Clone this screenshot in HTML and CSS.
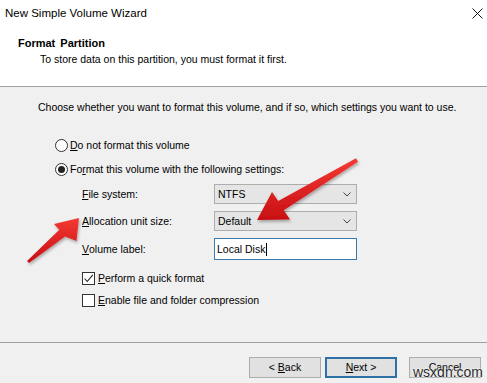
FILE: index.html
```html
<!DOCTYPE html>
<html lang="en">
<head>
    <meta charset="UTF-8">
    <title>New Simple Volume Wizard</title>
    <link rel="stylesheet" href="styles.css">
</head>
<body>
    <div class="window">
        <div class="header">
            <div class="titlebar">
                <span class="title">New Simple Volume Wizard</span>
                <svg class="close" width="11" height="11" viewBox="0 0 11 11">
                    <path d="M0.5 0.5 L10.5 10.5 M10.5 0.5 L0.5 10.5" stroke="#111" stroke-width="1" fill="none"/>
                </svg>
            </div>
            <div class="heading">Format Partition</div>
            <div class="subheading">To store data on this partition, you must format it first.</div>
        </div>

        <div class="content">
            <div class="intro">Choose whether you want to format this volume, and if so, which settings you want to use.</div>

            <div class="options">
                <div class="choice">
                    <span class="radio"></span>
                    <span><u>D</u>o not format this volume</span>
                </div>
                <div class="choice gap">
                    <span class="radio checked"></span>
                    <span>Fo<u>r</u>mat this volume with the following settings:</span>
                </div>

                <div class="settings">
                    <div class="label"><u>F</u>ile system:</div>
                    <div class="select">
                        <span>NTFS</span>
                        <svg width="8" height="5" viewBox="0 0 8 5"><path d="M0.5 0.5 L4 4 L7.5 0.5" stroke="#444" fill="none"/></svg>
                    </div>
                    <div class="label"><u>A</u>llocation unit size:</div>
                    <div class="select">
                        <span>Default</span>
                        <svg width="8" height="5" viewBox="0 0 8 5"><path d="M0.5 0.5 L4 4 L7.5 0.5" stroke="#444" fill="none"/></svg>
                    </div>
                    <div class="label"><u>V</u>olume label:</div>
                    <div class="input"><span class="caret">Local Disk</span></div>
                </div>

                <div class="check first">
                    <span class="box">
                        <svg width="11" height="11" viewBox="0 0 11 11"><path d="M1.5 5.5 L4.2 8.5 L9.8 1.8" stroke="#222" stroke-width="1.1" fill="none"/></svg>
                    </span>
                    <span><u>P</u>erform a quick format</span>
                </div>
                <div class="check second">
                    <span class="box"></span>
                    <span><u>E</u>nable file and folder compression</span>
                </div>
            </div>
        </div>

        <div class="footer">
            <button class="btn">&lt; <u>B</u>ack</button>
            <button class="btn default"><u>N</u>ext &gt;</button>
            <button class="btn cancel">Cancel</button>
        </div>

        <div class="watermark">wsxdn.com</div>

        <svg class="arrows" width="487" height="383" viewBox="0 0 487 383">
            <defs>
                <linearGradient id="red" x1="0" y1="0" x2="0" y2="1">
                    <stop offset="0" stop-color="#f43a33"/>
                    <stop offset="1" stop-color="#c80f14"/>
                </linearGradient>
                <filter id="shadow" x="-20%" y="-20%" width="140%" height="140%">
                    <feDropShadow dx="1" dy="2" stdDeviation="1.5" flood-color="#000" flood-opacity="0.3"/>
                </filter>
            </defs>
            <!-- arrow pointing at the allocation dropdown -->
            <polygon points="257,220 272,192 278.2,200.9 356,158.3 358,161.7 283.8,210.3 290,219.5" fill="url(#red)" filter="url(#shadow)"/>
            <!-- arrow pointing at the allocation label -->
            <polygon points="79,218 54,224 59.3,229.8 27,260.9 29,263.1 65.1,236.6 76.5,241" fill="url(#red)" filter="url(#shadow)"/>
        </svg>
    </div>
</body>
</html>
```

FILE: styles.css
```css
body { margin: 0; background: #f0f0f0; font-family: "Liberation Sans", Arial, sans-serif; font-size: 10.5px; line-height: 13px; color: #000; }
.window { position: relative; width: 487px; height: 383px; background: #f0f0f0; overflow: hidden; }

.header { height: 86px; background: #fff; border-bottom: 1px solid #a0a0a0; box-sizing: content-box; }
.titlebar { height: 27px; display: flex; align-items: center; justify-content: space-between; padding: 0 4px 0 5px; }
.title { font-size: 11.5px; }
.close { margin-top: -1px; }
.heading { margin: 10px 0 0 18px; font-weight: bold; font-size: 11px; word-spacing: 2px; }
.subheading { margin: 3px 0 0 40px; }

.content { height: 255px; padding-left: 38px; overflow: hidden; }
.intro { margin-top: 14px; }
.options { margin: 25px 0 0 17px; }
.choice { display: flex; align-items: center; gap: 2px; height: 13px; }
.choice.gap { margin-top: 11px; }
.radio { width: 11px; height: 11px; border: 1px solid #333; border-radius: 50%; background: #fff; display: flex; align-items: center; justify-content: center; }
.radio.checked::after { content: ""; width: 7px; height: 7px; border-radius: 50%; background: #222; }

.settings { display: grid; grid-template-columns: 132px 143px; grid-template-rows: 20px 20px 22px; row-gap: 7px; margin: 8px 0 0 27px; }
.label { display: flex; align-items: center; }
.select { display: flex; align-items: center; justify-content: space-between; padding: 0 5px 0 3px; background: #e5e5e5; border: 1px solid #adadad; }
.input { display: flex; align-items: center; padding-left: 2px; background: #fff; border: 1px solid #3a79ad; }
.caret { border-right: 1px solid #000; padding-right: 1px; }

.check { display: flex; align-items: center; gap: 3px; height: 13px; margin-left: 27px; }
.check.first { margin-top: 12px; }
.check.second { margin-top: 9px; }
.box { width: 11px; height: 11px; border: 1px solid #333; background: #fff; display: flex; align-items: center; justify-content: center; }

.footer { border-top: 1px solid #a0a0a0; display: flex; padding: 14px 0 0 249px; }
.btn { width: 72px; height: 21px; padding: 0; background: #e1e1e1; border: 1px solid #adadad; font: inherit; color: #000; }
.btn.default { margin-left: 4px; border: 2px solid #2f70a7; }
.btn.cancel { margin-left: 12px; }

.watermark { position: absolute; left: 413px; top: 365px; font-size: 14px; line-height: 14px; color: #2a2a2a; text-shadow: 0 0 2px #fff, 0 0 2px #fff; }
.arrows { position: absolute; left: 0; top: 0; pointer-events: none; }
```
